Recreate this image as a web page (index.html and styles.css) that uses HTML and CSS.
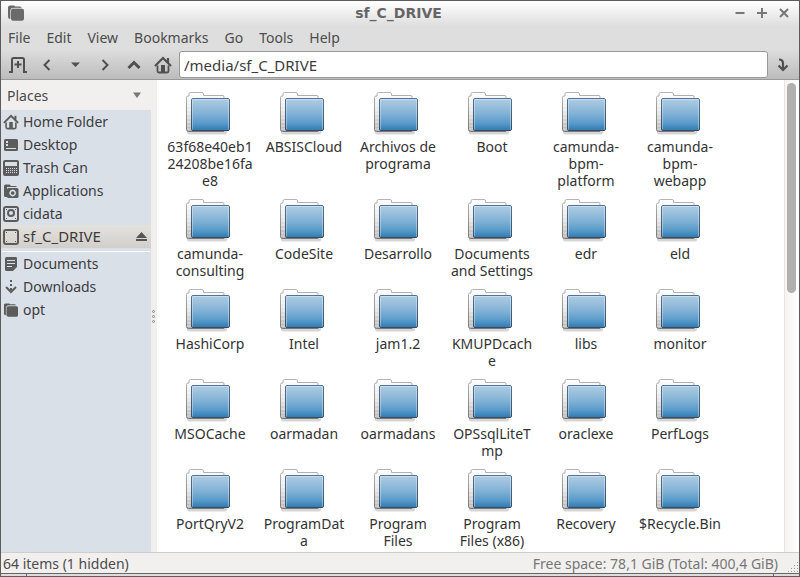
FILE: index.html
```
<!DOCTYPE html>
<html lang="en">
<head>
<meta charset="utf-8">
<title>sf_C_DRIVE</title>
<link rel="stylesheet" href="styles.css">
</head>
<body>
<svg class="defs" aria-hidden="true">
  <defs>
    <linearGradient id="blue" x1="0" y1="0" x2="0" y2="1">
      <stop offset="0" stop-color="#b0cde3"/><stop offset=".5" stop-color="#7fb0d4"/><stop offset=".78" stop-color="#579aca"/><stop offset="1" stop-color="#3079b0"/>
    </linearGradient>
    <linearGradient id="back" x1="0" y1="0" x2="0" y2="1">
      <stop offset="0" stop-color="#ffffff"/><stop offset=".5" stop-color="#e8e8e8"/><stop offset="1" stop-color="#b4b4b4"/>
    </linearGradient>
    <linearGradient id="edge" x1="0" y1="0" x2="0" y2="1">
      <stop offset="0" stop-color="#b4b4b4"/><stop offset="1" stop-color="#777"/>
    </linearGradient>
    <linearGradient id="rim" x1="0" y1="0" x2="0" y2="1">
      <stop offset="0" stop-color="#4f7298"/><stop offset="1" stop-color="#3c4c60"/>
    </linearGradient>
    <symbol id="folder" viewBox="0 0 48 44">
      <path d="M1 39h40v1.500q0 2-2 2H3q-2 0-2-2z" fill="#000" opacity=".16"/>
      <path d="M.5 37.500v-32q0-1.500 1.500-1.500h1V2Q3 .5 4.500 .5h11.500q1.500 0 1.500 1.500v1.500H37q1 0 1 1.500v34.500H2.500q-2 0-2-2z" fill="url(#back)" stroke="url(#edge)"/>
      <path d="M1 10h4M1 14h4M1 18h4M1 22h4M1 26h4M1 30h4M1 34h4M1 37h4" stroke="#fff" opacity=".5"/>
      <rect x="5.500" y="6.500" width="38" height="32" rx="1.500" fill="url(#blue)" stroke="url(#rim)"/>
      <path d="M6.500 37.500V7.500h36v30" fill="none" stroke="#fff" opacity=".35"/>
    </symbol>
    <symbol id="home" viewBox="0 0 18 18">
      <path d="M1 10L9 2l8 8M14 2v5" fill="none" stroke="currentColor" stroke-width="2.200"/>
      <path d="M3.500 9.500V15q0 1.500 1.500 1.500h8q1.500 0 1.500-1.500V9.500" fill="none" stroke="currentColor" stroke-width="1.800"/>
      <path d="M7 9h4v7H7z" fill="currentColor"/>
    </symbol>
    <symbol id="dir" viewBox="0 0 16 16">
      <path d="M0 12V2.500Q0 .5 2 .5h3.500q1.500 0 1.500 1h5q1.500 0 1.500 1.500H5Q2.500 3 2.500 5.500V14Q0 14 0 12z" fill="currentColor"/>
      <path d="M2.700 14V5.500Q2.700 3.200 5 3.200h9" fill="none" stroke="#ccc" stroke-width=".7"/>
      <rect x="3" y="3.700" width="13" height="12" rx="2" fill="currentColor"/>
    </symbol>
  </defs>
</svg>
<div class="window">
  <header class="top">
    <div class="titlebar">
      <svg class="app-icon" viewBox="0 0 16 16"><use href="#dir"/></svg>
      <h1>sf_C_DRIVE</h1>
      <div class="controls">
        <button aria-label="Minimize"><svg viewBox="0 0 10 10"><path d="M.5 5h9"/></svg></button>
        <button aria-label="Maximize"><svg viewBox="0 0 10 10"><path d="M0 5h10M5 0v10"/></svg></button>
        <button aria-label="Close"><svg viewBox="0 0 10 10"><path d="M1 1l8 8M9 1L1 9"/></svg></button>
      </div>
    </div>
    <nav class="menu">
      <button>File</button><button>Edit</button><button>View</button><button>Bookmarks</button><button>Go</button><button>Tools</button><button>Help</button>
    </nav>
    <div class="toolbar">
      <button aria-label="New tab"><svg viewBox="0 0 18 18"><path d="M0 16h3V3.500Q3 2 4.500 2h9Q15 2 15 3.500V16h3" fill="none" stroke="currentColor" stroke-width="2"/><path d="M9 5v7M5.500 8.500h7" stroke="currentColor" stroke-width="2"/></svg></button>
      <button aria-label="Back"><svg viewBox="0 0 18 18"><path d="M11.500 4L6.500 9l5 5" fill="none" stroke="currentColor" stroke-width="2"/></svg></button>
      <button aria-label="History"><svg viewBox="0 0 18 18"><path d="M4 6.500h9L8.500 11z" fill="currentColor"/></svg></button>
      <button aria-label="Forward"><svg viewBox="0 0 18 18"><path d="M6.500 4l5 5-5 5" fill="none" stroke="currentColor" stroke-width="2"/></svg></button>
      <button aria-label="Up"><svg viewBox="0 0 18 18"><path d="M3.500 12L9 6.500l5.500 5.500" fill="none" stroke="currentColor" stroke-width="3"/></svg></button>
      <button aria-label="Home"><svg><use href="#home"/></svg></button>
      <input type="text" aria-label="Location" value="/media/sf_C_DRIVE">
      <button aria-label="Go to location" class="jump"><svg viewBox="0 0 18 18"><path d="M5 3.500q4 0 4 4V13M4.500 9.500L9 14l4.500-4.500" fill="none" stroke="currentColor" stroke-width="2.200"/></svg></button>
    </div>
  </header>
  <div class="body">
    <aside class="side">
      <button class="places">Places<svg viewBox="0 0 8 6"><path d="M0 .5h8L4 6z" fill="#777"/></svg></button>
      <ul>
        <li><a href="#"><svg><use href="#home"/></svg>Home Folder</a></li>
        <li><a href="#"><svg viewBox="0 0 16 16"><rect x="1" y="2" width="14" height="12" rx="1.500" fill="currentColor"/><path d="M3 4h2v2H3zM3 7h2v2H3zM3 11h10v1H3z" fill="#dae0e8"/></svg>Desktop</a></li>
        <li><a href="#"><svg viewBox="0 0 16 16"><path d="M2 0h12q2 0 2 2v12q0 2-2 2H2q-2 0-2-2V2q0-2 2-2z" fill="currentColor"/><path d="M2 2h12v4H2z" fill="#dae0e8"/><path d="M3 8.500h11M3 10.500h11M3 12.500h11" stroke="#dae0e8" stroke-dasharray="1 1"/></svg>Trash Can</a></li>
        <li><a href="#"><svg viewBox="0 0 16 16"><path d="M1 13V3q0-1.500 1.500-1.500h4L8 3h5.500v1H4v10H2.500Q1 14 1 13z" fill="currentColor"/><rect x="4" y="5" width="11.500" height="10" rx="1.500" fill="currentColor"/><circle cx="9.700" cy="10" r="2.500" fill="none" stroke="#dae0e8" stroke-width="1.300"/><path d="M9.700 6.500v1M9.700 12.500v1M6.200 10h1M12.200 10h1" stroke="#dae0e8"/></svg>Applications</a></li>
        <li><a href="#"><svg viewBox="0 0 16 16"><rect x="1" y="1" width="14" height="14" rx="2" fill="none" stroke="currentColor" stroke-width="2"/><circle cx="8" cy="7" r="3" fill="none" stroke="currentColor" stroke-width="2"/><path d="M3 3h1v1H3zM12 3h1v1h-1zM3 12h1v1H3zM12 12h1v1h-1z" fill="currentColor"/></svg>cidata</a></li>
        <li class="current"><a href="#"><svg viewBox="0 0 16 16"><rect x="1" y="1" width="14" height="14" rx="2" fill="none" stroke="currentColor" stroke-width="2"/><path d="M3 3h1v1H3zM12 3h1v1h-1zM3 12h1v1H3zM12 12h1v1h-1z" fill="currentColor"/></svg>sf_C_DRIVE</a><button class="eject" aria-label="Eject"><svg viewBox="0 0 11 10"><path d="M0 6L5.500 0 11 6zM0 7h11v2H0z" fill="currentColor"/></svg></button></li>
      </ul>
      <ul class="marks">
        <li><a href="#"><svg viewBox="0 0 16 16"><path d="M2 2.500Q2 1 3.500 1H13q1 0 1 1.500V11l-4 4H3.500Q2 15 2 13.500z" fill="currentColor"/><path d="M4 4.500h8M4 7.500h8M4 10.500h5" stroke="#dae0e8"/></svg>Documents</a></li>
        <li><a href="#"><svg viewBox="0 0 16 16"><path d="M3 8l5 5 5-5" fill="none" stroke="currentColor" stroke-width="2"/><path d="M7 1h2v2H7zM7 5h2v2H7zM7 9h2v2H7z" fill="currentColor"/></svg>Downloads</a></li>
        <li><a href="#"><svg viewBox="-1 -1 17 17"><use href="#dir" width="15" height="15"/></svg>opt</a></li>
      </ul>
    </aside>
    <div class="splitter"><i></i><i></i><i></i></div>
    <main class="files">
      <a href="#"><svg><use href="#folder"/></svg><span>63f68e40eb1<br>24208be16fa<br>e8</span></a>
      <a href="#"><svg><use href="#folder"/></svg><span>ABSISCloud</span></a>
      <a href="#"><svg><use href="#folder"/></svg><span>Archivos de<br>programa</span></a>
      <a href="#"><svg><use href="#folder"/></svg><span>Boot</span></a>
      <a href="#"><svg><use href="#folder"/></svg><span>camunda-<br>bpm-<br>platform</span></a>
      <a href="#"><svg><use href="#folder"/></svg><span>camunda-<br>bpm-<br>webapp</span></a>
      <a href="#"><svg><use href="#folder"/></svg><span>camunda-<br>consulting</span></a>
      <a href="#"><svg><use href="#folder"/></svg><span>CodeSite</span></a>
      <a href="#"><svg><use href="#folder"/></svg><span>Desarrollo</span></a>
      <a href="#"><svg><use href="#folder"/></svg><span>Documents<br>and Settings</span></a>
      <a href="#"><svg><use href="#folder"/></svg><span>edr</span></a>
      <a href="#"><svg><use href="#folder"/></svg><span>eld</span></a>
      <a href="#"><svg><use href="#folder"/></svg><span>HashiCorp</span></a>
      <a href="#"><svg><use href="#folder"/></svg><span>Intel</span></a>
      <a href="#"><svg><use href="#folder"/></svg><span>jam1.2</span></a>
      <a href="#"><svg><use href="#folder"/></svg><span>KMUPDcach<br>e</span></a>
      <a href="#"><svg><use href="#folder"/></svg><span>libs</span></a>
      <a href="#"><svg><use href="#folder"/></svg><span>monitor</span></a>
      <a href="#"><svg><use href="#folder"/></svg><span>MSOCache</span></a>
      <a href="#"><svg><use href="#folder"/></svg><span>oarmadan</span></a>
      <a href="#"><svg><use href="#folder"/></svg><span>oarmadans</span></a>
      <a href="#"><svg><use href="#folder"/></svg><span>OPSsqlLiteT<br>mp</span></a>
      <a href="#"><svg><use href="#folder"/></svg><span>oraclexe</span></a>
      <a href="#"><svg><use href="#folder"/></svg><span>PerfLogs</span></a>
      <a href="#"><svg><use href="#folder"/></svg><span>PortQryV2</span></a>
      <a href="#"><svg><use href="#folder"/></svg><span>ProgramDat<br>a</span></a>
      <a href="#"><svg><use href="#folder"/></svg><span>Program<br>Files</span></a>
      <a href="#"><svg><use href="#folder"/></svg><span>Program<br>Files (x86)</span></a>
      <a href="#"><svg><use href="#folder"/></svg><span>Recovery</span></a>
      <a href="#"><svg><use href="#folder"/></svg><span>$Recycle.Bin</span></a>
    </main>
    <div class="scroll"><div class="thumb"></div></div>
  </div>
  <footer class="status">
    <span>64 items (1 hidden)</span>
    <span class="space">Free space: 78,1 GiB (Total: 400,4 GiB)</span>
    <svg viewBox="0 0 12 12"><path d="M10 1.500h1M7 4.500h1M10 4.500h1M4 7.500h1M7 7.500h1M10 7.500h1M1 10.500h1M4 10.500h1M7 10.500h1M10 10.500h1" stroke="#999"/></svg>
  </footer>
  <div class="grip"></div>
</div>
</body>
</html>
```

FILE: styles.css
```
* { box-sizing: border-box; }
body {
  margin: 0;
  font: 14px/17px "Noto Sans", "Open Sans", sans-serif;
  color: #3c3c3c;
}
button { border: 0; padding: 0; background: none; font: inherit; color: inherit; }
a { color: inherit; text-decoration: none; }
ul { margin: 0; padding: 0; list-style: none; }
svg { display: block; flex: none; }
.defs { position: absolute; width: 0; height: 0; }

.window {
  display: flex;
  flex-direction: column;
  height: 100vh;
  border: 1px solid #5c5c5c;
  background: #f2f0ef;
}
.top {
  border-bottom: 1px solid #999;
  background: linear-gradient(#fff 0, #dedede 25px, #dedede 48px, #bcbcbc 100%);
}
.titlebar { display: flex; align-items: center; height: 24px; padding: 0 10px 0 7px; color: #6a6a6a; }
.app-icon { width: 16px; height: 16px; }
h1 {
  flex: 1;
  margin: 0 0 0 38px;
  text-align: center;
  font: bold 14px/17px "DejaVu Sans", sans-serif;
  color: #666;
}
.controls { display: flex; gap: 12px; }
.controls svg { width: 10px; height: 10px; stroke: #777; stroke-width: 2; }

.menu { display: flex; gap: 16px; height: 25px; padding: 0 7px; color: #4c4c4c; }
.toolbar { display: flex; align-items: center; height: 29px; padding-left: 8px; gap: 11px; color: #505050; }
.toolbar svg { width: 18px; height: 18px; }
.toolbar input {
  flex: 1;
  min-width: 0;
  height: 27px;
  margin-left: -4px;
  padding: 0 4px;
  border: 1px solid #999;
  border-radius: 3px;
  background: #fff;
  font: inherit;
  font-size: 15px;
  color: #3c3c3c;
}
.toolbar .jump { margin: 0 7px 0 -5px; }

.body { display: flex; flex: 1; min-height: 0; border-bottom: 1px solid #d0cecc; }
.side { flex: none; width: 150px; background: #dae0e8; }
.places {
  display: flex;
  align-items: center;
  justify-content: space-between;
  width: 100%;
  height: 30px;
  padding: 0 10px 0 6px;
  background: #f2f0ef;
  color: #4c4c4c;
}
.places svg { width: 8px; height: 6px; }
.side li { display: flex; align-items: center; height: 23px; padding: 0 4px 0 2px; }
.side a { display: flex; align-items: center; flex: 1; gap: 4px; }
.side a svg { width: 16px; height: 16px; color: #5c5c5c; }
.side .current { background: linear-gradient(#e4e2df, #d2cfca); font-size: 15px; }
.eject svg { width: 11px; height: 10px; color: #555; }
.marks { margin: 3px 1px 0; border-top: 1px solid #fff; }
.side .marks li { padding: 0 0 0 1px; }

.splitter {
  flex: none;
  display: flex;
  flex-direction: column;
  align-items: flex-start;
  justify-content: center;
  gap: 2px;
  width: 6px;
  padding-left: 1px;
  background: #f2f0ef;
}
.splitter i { width: 3px; height: 3px; border: 1px solid #888; border-radius: 50%; }

.files {
  flex: 1;
  display: grid;
  grid-template-columns: repeat(auto-fill, 94px);
  align-content: start;
  row-gap: 10px;
  padding: 12px 0 0 6px;
  overflow: hidden;
  background: #fff;
  color: #333;
}
.files a { display: flex; flex-direction: column; align-items: center; gap: 2px; text-align: center; white-space: nowrap; }
.files svg { width: 48px; height: 44px; }

.scroll { flex: none; width: 15px; padding: 3px 3px 3px 2px; border-left: 1px solid #e6e4e2; background: linear-gradient(90deg, #f5f4f3, #fff); }
.thumb { height: 45%; border-radius: 5px; background: #b0b0b0; }

.status { display: flex; align-items: center; height: 20px; padding-left: 2px; color: #4c4c4c; }
.status .space { margin-left: auto; margin-right: 9px; color: #777; }
.status svg { width: 12px; height: 12px; align-self: flex-end; }
.grip {
  height: 3px;
  border-top: 1px solid #666;
  background: linear-gradient(#666, #666) 25px 0 / 1px 3px no-repeat, linear-gradient(#666, #666) calc(100% - 25px) 0 / 1px 3px no-repeat, #ddd;
}
```
